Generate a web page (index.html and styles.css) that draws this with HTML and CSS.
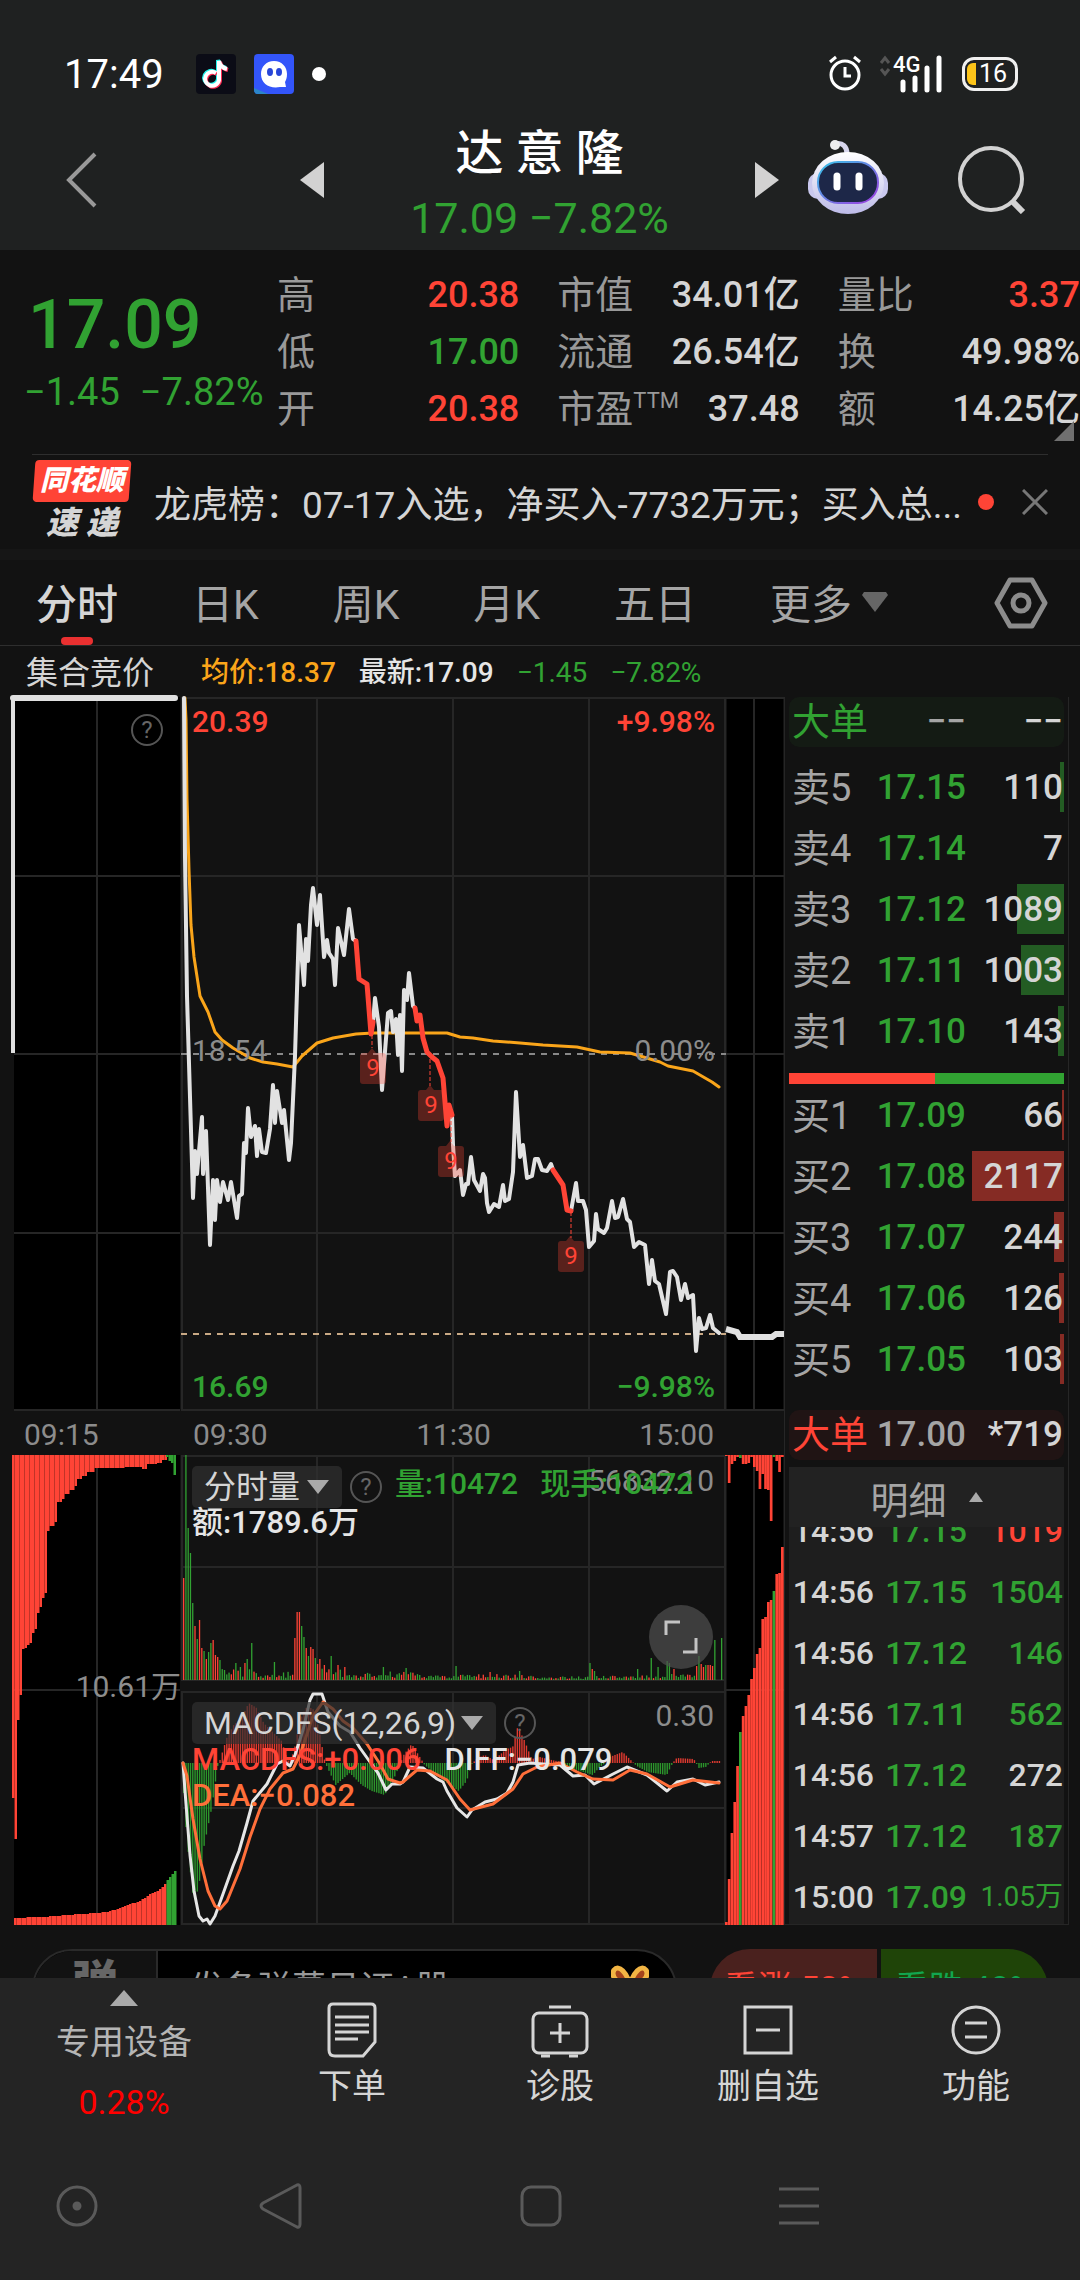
FILE: index.html
```html
<!DOCTYPE html>
<html lang="zh-CN">
<head>
    <meta charset="UTF-8">
    <meta name="viewport" content="width=device-width, initial-scale=1.0">
    <title>达意隆 分时</title>
    <link rel="stylesheet" href="styles.css">
</head>
<body>

<header class="header">
    <!-- Status bar -->
    <div class="status-bar">
        <span class="clock">17:49</span>
        <svg class="app-icon" viewBox="0 0 40 40">
            <rect width="40" height="40" rx="4" fill="#0b0c16"/>
            <g fill="none" stroke-width="4">
                <path d="M19 18a7 7 0 1 0 3 7V6c1 5 4 7 8 8" stroke="#25f4ee"/>
                <path d="M21 20a7 7 0 1 0 3 7V8c1 5 4 7 8 8" stroke="#fe2c55"/>
                <path d="M20 19a7 7 0 1 0 3 7V7c1 5 4 7 8 8" stroke="#fff"/>
            </g>
        </svg>
        <svg class="app-icon" viewBox="0 0 40 40">
            <rect width="40" height="40" rx="4" fill="#3355fa"/>
            <path d="M0 34l14 6H4a4 4 0 0 1-4-4z" fill="#2b86c9"/>
            <path d="M20 7c8 0 13 6 13 13 0 4-1 6-2 8l1 5h-6c-10 2-19-3-19-13C7 13 12 7 20 7z" fill="#fff"/>
            <ellipse cx="16" cy="18" rx="3" ry="4" fill="#2846d8"/>
            <ellipse cx="25" cy="18" rx="3" ry="4" fill="#2846d8"/>
        </svg>
        <span class="notice-dot"></span>
        <span class="status-icons">
            <svg width="34" height="38" viewBox="0 0 34 38" fill="none" stroke="#fff" stroke-width="3">
                <circle cx="17" cy="20" r="14"/>
                <path d="M17 12v9h6M2 7l6-5M32 7l-6-5"/>
            </svg>
            <span class="signal">
                <svg width="66" height="38" viewBox="0 0 66 38" fill="none">
                    <path d="M2 8l4-5 4 5M2 14l4 5 4-5" stroke="#555" stroke-width="3"/>
                    <path d="M24 27v8M36 23v12M48 13v22M60 3v32" stroke="#fff" stroke-width="5" stroke-linecap="round"/>
                </svg>
                <span class="network">4G</span>
            </span>
            <span class="battery">16</span>
        </span>
    </div>

    <!-- Stock title -->
    <div class="title-bar">
        <div class="title-left">
            <button aria-label="返回"><svg width="32" height="56" viewBox="0 0 32 56"><path d="M29 2L3 28l26 26" fill="none" stroke="#999" stroke-width="4"/></svg></button>
            <button aria-label="上一只"><svg width="24" height="36" viewBox="0 0 24 36"><path d="M24 0v36L0 18z" fill="#d2d2d2"/></svg></button>
        </div>
        <div class="title-center">
            <h1>达 意 隆</h1>
            <p class="green">17.09 −7.82%</p>
        </div>
        <div class="title-right">
            <button aria-label="下一只"><svg width="24" height="36" viewBox="0 0 24 36"><path d="M0 0v36l24-18z" fill="#d2d2d2"/></svg></button>
            <button class="robot" aria-label="助手">
                <svg width="82" height="76" viewBox="0 0 82 76">
                    <defs>
                        <linearGradient id="shell" x1="0" y1="0" x2="0" y2="1"><stop offset="0" stop-color="#fff"/><stop offset="1" stop-color="#bdbbe8"/></linearGradient>
                        <linearGradient id="rim" x1="0" y1="0" x2="1" y2="1"><stop offset="0" stop-color="#35c3e8"/><stop offset="1" stop-color="#a03be0"/></linearGradient>
                    </defs>
                    <path d="M28 5c8-2 12 3 12 10" fill="none" stroke="#d8d7ee" stroke-width="5"/>
                    <circle cx="28" cy="6" r="5" fill="#eee"/>
                    <rect x="1" y="34" width="80" height="26" rx="10" fill="#c9c8ee"/>
                    <ellipse cx="41" cy="44" rx="36" ry="31" fill="url(#shell)"/>
                    <rect x="11" y="23" width="60" height="41" rx="20" fill="#1d2748" stroke="url(#rim)" stroke-width="2"/>
                    <path d="M30 37v11M52 37v11" stroke="#fff" stroke-width="7" stroke-linecap="round"/>
                </svg>
            </button>
            <button class="search" aria-label="搜索"><svg width="68" height="68" viewBox="0 0 68 68" fill="none" stroke="#d2d2d2" stroke-width="4"><circle cx="33" cy="33" r="31"/><path d="M54 55l11 11" stroke-width="6"/></svg></button>
        </div>
    </div>
</header>

<!-- Quote -->
<section class="quote">
    <div class="quote-price green">
        <div class="price">17.09</div>
        <div class="change"><span>−1.45</span><span>−7.82%</span></div>
    </div>
    <dl class="quote-grid">
        <div><dt>高</dt><dd class="red">20.38</dd></div>
        <div><dt>市值</dt><dd>34.01亿</dd></div>
        <div><dt>量比</dt><dd class="red">3.37</dd></div>
        <div><dt>低</dt><dd class="green">17.00</dd></div>
        <div><dt>流通</dt><dd>26.54亿</dd></div>
        <div><dt>换</dt><dd>49.98%</dd></div>
        <div><dt>开</dt><dd class="red">20.38</dd></div>
        <div><dt>市盈<sup>TTM</sup></dt><dd>37.48</dd></div>
        <div><dt>额</dt><dd>14.25亿</dd></div>
    </dl>
    <span class="quote-corner"></span>
</section>

<!-- News -->
<section class="news">
    <div class="news-logo">
        <span class="news-brand">同花顺</span>
        <span class="news-name">速 递</span>
    </div>
    <a class="news-text" href="#">龙虎榜：07-17入选，净买入-7732万元；买入总...</a>
    <span class="news-dot"></span>
    <button aria-label="关闭"><svg width="26" height="26" viewBox="0 0 26 26"><path d="M1 1l24 24M25 1L1 25" stroke="#777" stroke-width="3"/></svg></button>
</section>

<nav class="tabs">
    <div class="tab-list">
        <a class="active" href="#">分时</a>
        <a href="#">日K</a>
        <a href="#">周K</a>
        <a href="#">月K</a>
        <a href="#">五日</a>
        <a class="more" href="#">更多<svg width="26" height="20" viewBox="0 0 26 20"><path d="M2 0h22l2 3-13 17L0 3z" fill="#666"/></svg></a>
    </div>
    <button aria-label="设置">
        <svg width="54" height="52" viewBox="0 0 54 52" fill="none" stroke="#8c8c8c" stroke-width="5" stroke-linejoin="round">
            <path d="M16 3h22l13 23-13 23H16L3 26z"/>
            <circle cx="27" cy="26" r="8"/>
        </svg>
    </button>
</nav>

<div class="summary">
    <span class="summary-auction">集合竞价</span>
    <span class="orange">均价:18.37</span>
    <span class="white">最新:17.09</span>
    <span class="green">−1.45</span>
    <span class="green">−7.82%</span>
</div>

<main class="market">
    <div class="charts">
        <!-- Call auction -->
        <div class="column">
            <div class="panel">
                <svg class="price-chart" viewBox="0 0 169 714" preserveAspectRatio="none">
                    <rect x="2" width="166" height="714" fill="#000"/>
                    <path class="grid" d="M85 0v714M2 179h166M2 357h166M2 536h166M2 713h166"/>
                    <path d="M1 356V1" stroke="#e0e0e0" stroke-width="4"/>
                    <path d="M1 1h162" stroke="#e0e0e0" stroke-width="6" stroke-linecap="round"/>
                </svg>
                <button class="help help-auction" aria-label="集合竞价说明">?</button>
            </div>
            <div class="axis"><span>09:15</span></div>
            <div class="panel">
                <svg class="lower-chart" viewBox="0 0 169 470" preserveAspectRatio="none">
                    <rect x="2" width="166" height="470" fill="#000"/>
                    <path class="grid" d="M85 0v470M2 235h166"/>
                    <g id="auction-bars"></g>
                </svg>
                <span class="label label-auction">10.61万</span>
            </div>
        </div>

        <!-- Continuous trading -->
        <div class="column">
            <div class="panel">
                <svg class="price-chart" viewBox="0 0 545 714" preserveAspectRatio="none">
                    <path class="grid" d="M1 0v714M136 0v714M272 0v714M408 0v714M544 0v714M0 1h545M0 179h545M0 536h545M0 713h545"/>
                    <path d="M0 357h545" stroke="#888" stroke-width="2" stroke-dasharray="6 6"/>
                    <path d="M0 637h545" stroke="#c9a985" stroke-width="2" stroke-dasharray="6 6"/>
                    <polyline class="line average" points="4,1 5,23 6,102 8,173 10,228 13,260 19,299 27,315 34,335 41,343 52,351 69,361 82,365 96,367 112,370 121,359 136,346 152,341 175,337 192,336 229,336 266,336 279,340 292,341 312,344 339,346 362,348 396,350 419,355 449,356 479,365 487,369 512,374 531,385 538,390"/>
                    <polyline class="line price-line" points="3,1 4,160 6,299 12,501 14,454 16,477 21,420 22,477 25,434 29,548 32,483 34,523 36,483 39,505 42,485 47,503 50,485 56,521 58,499 61,497 63,446 65,456 67,411 70,440 74,429 76,459 78,432 81,455 85,456 89,432 92,388 94,426 96,394 101,426 103,413 108,463 110,446 114,359 118,228 123,288 125,242 127,264 130,208 132,191 136,228 139,198 143,260 146,243 148,256 152,262 154,288 157,231 163,258 168,212 172,242 175,244"/>
                    <polyline class="line price-line" points="192,326 194,301 198,330 201,393 207,316 210,314 212,335 215,322 217,358 219,318 221,374 223,293 226,303 228,276 232,309 234,311"/>
                    <polyline class="line price-line" points="271,418 272,448 274,479 279,473 282,498 285,487 287,487 290,460 293,483 299,494 302,477 304,481 306,506 308,515 313,507 318,510 322,488 324,504 328,502 332,475 335,395 339,460 342,448 346,481 351,479 354,462 357,462 361,473 366,474 370,467 372,473"/>
                    <polyline class="line price-line" points="390,514 395,486 397,504 402,504 405,513 408,550 413,544 415,517 417,532 423,536 426,531 431,504 434,521 437,520 442,502 446,522 449,525 453,550 458,545 464,548 468,587 471,563 474,584 478,587 485,617 489,575 492,574 496,580 500,603 504,587 507,601 512,598 515,654 518,621 521,632 525,631 529,618 532,631 538,636"/>
                    <polyline class="line signal-line" points="175,244 178,282 186,287 190,337 192,325"/>
                    <polyline class="line signal-line" points="234,311 236,324 239,318 242,341 246,355 251,360 256,364 262,381 266,429 268,408 271,418"/>
                    <polyline class="line signal-line" points="372,473 382,488 386,513 390,514"/>
                    <path d="M191 338v13M249 362v27M270 418v27M390 515v26" stroke="#ff4436" stroke-dasharray="4 2"/>
                    <g class="nine">
                        <path d="M179 359q0-3 3-3h5l4-5 4 5h7q3 0 3 3v25q0 3-3 3h-20q-3 0-3-3z"/>
                        <path d="M237 396q0-3 3-3h5l4-5 4 5h7q3 0 3 3v25q0 3-3 3h-20q-3 0-3-3z"/>
                        <path d="M257 452q0-3 3-3h5l4-5 4 5h7q3 0 3 3v25q0 3-3 3h-20q-3 0-3-3z"/>
                        <path d="M377 547q0-3 3-3h5l4-5 4 5h7q3 0 3 3v25q0 3-3 3h-20q-3 0-3-3z"/>
                        <text x="192" y="379">9</text>
                        <text x="250" y="416">9</text>
                        <text x="270" y="472">9</text>
                        <text x="390" y="567">9</text>
                    </g>
                </svg>
                <span class="label top-left red">20.39</span>
                <span class="label top-right red">+9.98%</span>
                <span class="label middle-left">18.54</span>
                <span class="label middle-right">0.00%</span>
                <span class="label bottom-left green">16.69</span>
                <span class="label bottom-right green">−9.98%</span>
            </div>
            <div class="axis axis-main"><span>09:30</span><span>11:30</span><span>15:00</span></div>
            <div class="panel">
                <svg class="lower-chart" viewBox="0 0 545 470" preserveAspectRatio="none">
                    <path class="grid" d="M1 0v225M136 0v225M272 0v225M408 0v225M1 237v233M136 237v233M272 237v233M408 237v233M544 0v470M0 1h545M0 112h545M0 225h545M0 237h545M0 353h545M0 469h545"/>
                    <g id="volume-bars"></g>
                    <g id="macd-bars"></g>
                    <polyline class="line diff" points="2,308 4,336 9,400 13,436 18,461 22,466 26,464 29,469 34,461 42,439 52,411 58,396 66,368 72,346 86,329 96,309 102,306 109,311 114,300 122,275 129,245 132,239 141,239 147,257 159,271 169,277 179,293 189,307 197,318 205,335 211,329 219,329 222,327 229,312 242,313 256,324 262,327 266,336 276,353 286,362 291,355 304,347 316,344 326,338 332,327 337,310 349,308 362,309 379,310 392,321 404,320 413,329 432,319 446,312 466,320 486,336 496,327 512,324 524,330 538,327"/>
                    <polyline class="line dea" points="2,308 6,321 12,364 19,404 27,436 34,451 39,454 46,446 59,414 69,382 79,354 89,334 102,318 112,314 119,300 132,261 142,247 152,254 162,266 172,273 186,289 199,309 207,324 219,328 222,327 236,315 249,316 266,325 279,344 289,355 312,349 332,334 342,319 356,312 379,308 396,317 412,324 432,325 449,315 466,319 489,332 512,325 538,328"/>
                </svg>
                <span class="label volume-max">56832.10</span>
                <div class="indicator volume-indicator">
                    <label class="picker picker-volume">
                        <select aria-label="副图指标一"><option>分时量</option></select>
                        <svg width="22" height="14" viewBox="0 0 22 14"><path d="M0 0h22L11 14z" fill="#aaa"/></svg>
                    </label>
                    <button class="help" aria-label="分时量说明">?</button>
                    <span class="green">量:10472</span>
                    <span class="green hand">现手:10472</span>
                </div>
                <span class="reading reading-amount white">额:1789.6万</span>
                <button class="expand" aria-label="全屏">
                    <svg width="34" height="34" viewBox="0 0 34 34" fill="none" stroke="#c4c4c4" stroke-width="3"><path d="M2 15V2h14M19 32h13V18"/></svg>
                </button>
                <div class="indicator macd-indicator">
                    <label class="picker picker-macd">
                        <select aria-label="副图指标二"><option>MACDFS(12,26,9)</option></select>
                        <svg width="22" height="14" viewBox="0 0 22 14"><path d="M0 0h22L11 14z" fill="#aaa"/></svg>
                    </label>
                    <button class="help" aria-label="MACDFS说明">?</button>
                </div>
                <span class="label macd-max">0.30</span>
                <div class="reading reading-macd"><span class="red">MACDFS:+0.006</span><span class="white">DIFF:−0.079</span></div>
                <span class="reading reading-dea">DEA:−0.082</span>
            </div>
        </div>

        <!-- After hours -->
        <div class="column">
            <div class="panel">
                <svg class="price-chart" viewBox="0 0 58 714" preserveAspectRatio="none">
                    <rect x="1" width="56" height="714" fill="#000"/>
                    <path class="grid" d="M28 0v714M0 1h58M0 179h58M0 357h58M0 536h58M0 713h58"/>
                    <polyline points="0,632 11,635 14,640 46,640 50,637 58,637" fill="none" stroke="#e0e0e0" stroke-width="6"/>
                </svg>
            </div>
            <div class="axis"></div>
            <div class="panel">
                <svg class="lower-chart" viewBox="0 0 58 470" preserveAspectRatio="none">
                    <rect x="1" width="56" height="470" fill="#000"/>
                    <path class="grid" d="M28 0v470M0 235h58"/>
                    <g id="after-bars"></g>
                </svg>
            </div>
        </div>
    </div>

    <!-- Order book -->
    <aside class="book">
        <table class="big-order big-sell">
            <tr><th class="green">大单</th><td class="muted">−−</td><td>−−</td></tr>
        </table>
        <table class="levels sell">
            <tr><th>卖5</th><td>17.15</td><td><i style="width: 4px"></i><b>110</b></td></tr>
            <tr><th>卖4</th><td>17.14</td><td><b>7</b></td></tr>
            <tr><th>卖3</th><td>17.12</td><td><i style="width: 47px"></i><b>1089</b></td></tr>
            <tr><th>卖2</th><td>17.11</td><td><i style="width: 43px"></i><b>1003</b></td></tr>
            <tr><th>卖1</th><td>17.10</td><td><i style="width: 6px"></i><b>143</b></td></tr>
        </table>
        <div class="ratio"><span style="width: 53%"></span></div>
        <table class="levels buy">
            <tr><th>买1</th><td>17.09</td><td><i style="width: 2px"></i><b>66</b></td></tr>
            <tr><th>买2</th><td>17.08</td><td><i style="width: 92px"></i><b>2117</b></td></tr>
            <tr><th>买3</th><td>17.07</td><td><i style="width: 10px"></i><b>244</b></td></tr>
            <tr><th>买4</th><td>17.06</td><td><i style="width: 5px"></i><b>126</b></td></tr>
            <tr><th>买5</th><td>17.05</td><td><i style="width: 4px"></i><b>103</b></td></tr>
        </table>
        <table class="big-order big-buy">
            <tr><th class="red">大单</th><td class="muted">17.00</td><td>*719</td></tr>
        </table>
        <button class="detail-header">明细<svg width="14" height="10" viewBox="0 0 14 10"><path d="M7 0l7 10H0z" fill="#aaa"/></svg></button>
        <div class="detail">
            <table>
                <tr><td>14:56</td><td>17.15</td><td class="red">1019</td></tr>
                <tr><td>14:56</td><td>17.15</td><td class="green">1504</td></tr>
                <tr><td>14:56</td><td>17.12</td><td class="green">146</td></tr>
                <tr><td>14:56</td><td>17.11</td><td class="green">562</td></tr>
                <tr><td>14:56</td><td>17.12</td><td>272</td></tr>
                <tr><td>14:57</td><td>17.12</td><td class="green">187</td></tr>
                <tr><td>15:00</td><td>17.09</td><td class="green small">1.05万</td></tr>
            </table>
        </div>
    </aside>
</main>

<!-- Comment bar, mostly under the bottom menu -->
<section class="comments">
    <div class="comment-box">
        <button class="comment-toggle">弹</button>
        <a class="comment-input" href="#">发条弹幕见证A股</a>
        <svg width="38" height="40" viewBox="0 0 38 40" fill="none"><path d="M19 20C16 8 8-1 3 5c-4 7 5 15 16 15zM19 20C22 8 30-1 35 5c4 7-5 15-16 15z" stroke="#f2b544" stroke-width="5" fill="#a5441c"/></svg>
    </div>
    <div class="vote">
        <button class="vote-up">看涨 52%</button>
        <button class="vote-down">看跌 48%</button>
    </div>
</section>

<footer class="footer">
    <nav class="menu">
        <a class="device" href="#">
            <svg width="28" height="16" viewBox="0 0 28 16"><path d="M14 0l14 16H0z" fill="#aaa"/></svg>
            <span>专用设备</span>
            <span class="rate">0.28%</span>
        </a>
        <a href="#">
            <svg width="60" height="56" viewBox="0 0 60 56" fill="none" stroke="#d5d5d5" stroke-width="3"><path d="M11 2h38q4 0 4 4v34L41 54H13q-6 0-6-6V6q0-4 4-4zM13 15h34M13 23h34M13 30h34M13 37h23"/></svg>
            <span>下单</span>
        </a>
        <a href="#">
            <svg width="60" height="56" viewBox="0 0 60 56" fill="none" stroke="#d5d5d5" stroke-width="3"><rect x="3" y="11" width="54" height="40" rx="6"/><path d="M19 5h22M30 21v20M20 31h20M11 54h9M39 54h9"/></svg>
            <span>诊股</span>
        </a>
        <a href="#">
            <svg width="60" height="56" viewBox="0 0 60 56" fill="none" stroke="#d5d5d5" stroke-width="3"><rect x="7" y="5" width="46" height="46"/><path d="M18 28h24"/></svg>
            <span>删自选</span>
        </a>
        <a href="#">
            <svg width="60" height="56" viewBox="0 0 60 56" fill="none" stroke="#d5d5d5" stroke-width="3"><circle cx="30" cy="28" r="23"/><path d="M19 21h22M19 35h22"/></svg>
            <span>功能</span>
        </a>
    </nav>
    <div class="system-nav">
        <button aria-label="悬浮球"><svg width="44" height="48" viewBox="0 0 44 48" fill="none" stroke="#5a5a5a" stroke-width="3"><circle cx="22" cy="24" r="19"/><circle cx="22" cy="24" r="3" fill="#5a5a5a"/></svg></button>
        <button aria-label="返回"><svg width="44" height="48" viewBox="0 0 44 48" fill="none" stroke="#5a5a5a" stroke-width="3" stroke-linejoin="round"><path d="M38 3Q41 2 41 6v36q0 4-3 3L4 27q-4-3 0-6z"/></svg></button>
        <button aria-label="主页"><svg width="44" height="48" viewBox="0 0 44 48" fill="none" stroke="#5a5a5a" stroke-width="3"><rect x="3" y="5" width="38" height="38" rx="9"/></svg></button>
        <button aria-label="多任务"><svg width="44" height="48" viewBox="0 0 44 48" fill="none" stroke="#5a5a5a" stroke-width="3"><path d="M2 7h40M2 24h40M2 41h40"/></svg></button>
    </div>
</footer>

<script src="chart.js"></script>
</body>
</html>
```
FILE: styles.css
```css
* {
    box-sizing: border-box;
}

body {
    margin: 0;
    min-height: 100vh;
    display: flex;
    flex-direction: column;
    background-color: #121212;
    color: #d5d5d5;
    font-family: Roboto, "Noto Sans CJK SC", sans-serif;
    font-size: 30px;
}

h1, p, dl, dd {
    margin: 0;
}

a {
    color: inherit;
    text-decoration: none;
}

button {
    padding: 0;
    border: none;
    background: none;
    color: inherit;
    font: inherit;
    cursor: pointer;
}

svg {
    display: block;
}

.green {
    color: #31a232;
}

.red {
    color: #ff4436;
}

.orange {
    color: #faa51a;
}

.white {
    color: #e6e6e6;
}

/* Header */
.header {
    background-color: #1f2121;
}

.status-bar {
    display: flex;
    align-items: center;
    height: 112px;
    padding: 36px 62px 0 64px;
    color: #fff;
}

.clock {
    margin-right: 32px;
    font-size: 40px;
}

.app-icon {
    width: 40px;
    height: 40px;
    margin-right: 18px;
}

.notice-dot {
    width: 14px;
    height: 14px;
    border-radius: 50%;
    background-color: #fff;
}

.status-icons {
    display: flex;
    align-items: center;
    margin-left: auto;
    gap: 17px;
}

.signal {
    position: relative;
}

.network {
    position: absolute;
    top: 0;
    left: 14px;
    font-size: 22px;
    font-weight: 500;
    line-height: 20px;
}

.battery {
    position: relative;
    width: 56px;
    height: 34px;
    padding-left: 6px;
    border: 3px solid #f0f0f0;
    border-radius: 12px;
    font-size: 25px;
    line-height: 28px;
    text-align: center;
}

.battery::before {
    content: "";
    position: absolute;
    top: 3px;
    left: 2px;
    width: 9px;
    height: 22px;
    border-radius: 6px 0 0 6px;
    background-color: #fcc419;
}

.title-bar {
    display: grid;
    grid-template-columns: 324px 1fr 325px;
    height: 138px;
}

.title-left {
    display: flex;
    align-items: center;
    justify-content: space-between;
    padding: 0 0 4px 66px;
}

.title-center {
    padding-top: 12px;
    text-align: center;
}

.title-center h1 {
    color: #fff;
    font-size: 48px;
    font-weight: 500;
    line-height: 60px;
}

.title-center p {
    font-size: 43px;
    line-height: 68px;
}

.title-right {
    display: flex;
    align-items: center;
    padding-bottom: 4px;
}

.robot {
    margin: 0 69px 6px 28px;
}

/* Quote */
.quote {
    position: relative;
    display: grid;
    grid-template-columns: 277px 1fr;
    padding: 17px 0 16px;
}

.quote-price {
    padding: 20px 0 0 24px;
}

.price {
    padding-left: 4px;
    font-size: 68px;
    font-weight: 500;
    line-height: 76px;
}

.change {
    display: flex;
    gap: 20px;
    font-size: 38px;
    line-height: 58px;
}

.quote-grid {
    display: grid;
    grid-template-columns: repeat(3, 1fr);
    column-gap: 38px;
    font-size: 36px;
}

.quote-grid div {
    display: flex;
    justify-content: space-between;
    line-height: 57px;
    white-space: nowrap;
}

.quote-grid dt {
    color: #999;
    font-size: 38px;
}

.quote-grid dd {
    font-weight: 500;
}

.quote-grid sup {
    font-size: 22px;
    line-height: 20px;
}

.quote-corner {
    position: absolute;
    right: 6px;
    bottom: 13px;
    border-left: 20px solid transparent;
    border-bottom: 20px solid #707070;
}

/* News */
.news {
    display: flex;
    align-items: center;
    height: 95px;
    margin: 0 32px;
    border-top: 1px solid #2e2e2e;
}

.news-logo {
    display: flex;
    flex-direction: column;
    align-items: center;
    width: 100px;
    margin-right: 22px;
    font-style: italic;
    font-weight: 900;
    line-height: 42px;
}

.news-brand {
    position: relative;
    z-index: 0;
    color: #fff;
    font-size: 28px;
}

.news-brand::before {
    content: "";
    position: absolute;
    inset: 0 -6px;
    z-index: -1;
    border-radius: 4px;
    background-color: #ff4436;
    transform: skewX(-4deg);
}

.news-name {
    font-size: 32px;
}

.news-text {
    flex: 1;
    overflow: hidden;
    font-size: 37px;
    white-space: nowrap;
}

.news-dot {
    width: 16px;
    height: 16px;
    margin-right: 28px;
    border-radius: 50%;
    background-color: #ff4436;
}

/* Tabs */
.tabs {
    display: flex;
    align-items: center;
    justify-content: space-between;
    height: 97px;
    padding: 0 32px 0 36px;
    border-top: 11px solid #161616;
    border-bottom: 1px solid #2e2e2e;
}

.tab-list {
    display: flex;
    justify-content: space-between;
    width: 85%;
    max-width: 852px;
    color: #a5a5a5;
    font-size: 41px;
    line-height: 80px;
}

.tab-list a {
    padding-top: 5px;
}

.tab-list .active {
    position: relative;
    color: #d5d5d5;
    font-weight: 500;
}

.tab-list .active::after {
    content: "";
    position: absolute;
    bottom: 0;
    left: 25px;
    width: 32px;
    height: 8px;
    border-radius: 4px;
    background-color: #e93030;
}

.more {
    display: flex;
    align-items: center;
    gap: 10px;
}

.more svg {
    margin-bottom: 6px;
}

.summary {
    display: flex;
    gap: 23px;
    height: 51px;
    padding-left: 26px;
    font-size: 28px;
    line-height: 54px;
}

.summary .white, .summary .orange {
    font-weight: 500;
}

.summary-auction {
    width: 152px;
    font-size: 32px;
}

/* Charts */
.market {
    display: grid;
    grid-template-columns: 1fr 285px;
    padding-right: 11px;
}

.charts {
    display: grid;
    grid-template-columns: 169fr 545fr 58fr;
    min-width: 0;
    padding-left: 12px;
}

.panel {
    position: relative;
}

.panel svg {
    overflow: visible;
}

.price-chart {
    width: 100%;
    height: 714px;
}

.lower-chart {
    width: 100%;
    height: 470px;
}

.grid {
    fill: none;
    stroke: #262626;
    stroke-width: 2;
}

.line {
    fill: none;
    stroke-width: 4;
    stroke-linejoin: round;
    stroke-linecap: round;
}

.average {
    stroke: #faa51a;
    stroke-width: 3;
}

.price-line {
    stroke: #e2e2e2;
}

.signal-line {
    stroke: #ff4436;
    stroke-width: 5;
}

.diff {
    stroke: #e6e6e6;
    stroke-width: 3;
}

.dea {
    stroke: #ff6f3a;
    stroke-width: 3;
}

.nine path {
    fill: #ff4436;
    fill-opacity: 0.3;
}

.nine text {
    fill: #ff4436;
    font-size: 24px;
    text-anchor: middle;
}

.label, .reading {
    position: absolute;
    font-size: 30px;
    line-height: 36px;
    white-space: nowrap;
}

.label {
    color: #8c8c8c;
}

.label.red {
    color: #ff4436;
    font-weight: 500;
}

.label.green {
    color: #31a232;
    font-weight: 500;
}

.reading {
    font-size: 31px;
    font-weight: 500;
}

.top-left {
    top: 7px;
    left: 11px;
}

.top-right {
    top: 7px;
    right: 11px;
}

.middle-left {
    top: 336px;
    left: 11px;
}

.middle-right {
    top: 336px;
    right: 11px;
}

.bottom-left {
    bottom: 6px;
    left: 11px;
}

.bottom-right {
    bottom: 6px;
    right: 11px;
}

.label-auction {
    top: 214px;
    right: 0;
}

.axis {
    height: 44px;
    padding-left: 12px;
    color: #8c8c8c;
    line-height: 48px;
}

.axis-main {
    display: flex;
    justify-content: space-between;
    padding: 0 12px;
}

.help {
    width: 32px;
    height: 32px;
    border: 2px solid #555;
    border-radius: 50%;
    color: #666;
    font-size: 24px;
    line-height: 28px;
}

.help-auction {
    position: absolute;
    top: 17px;
    right: 18px;
}

.indicator {
    position: absolute;
    left: 11px;
    display: flex;
    align-items: center;
    line-height: 36px;
    white-space: nowrap;
}

.indicator .help {
    margin: 0 13px 0 8px;
    line-height: 28px;
}

.indicator .green {
    padding-bottom: 6px;
    font-weight: 500;
}

.volume-indicator {
    top: 11px;
}

.macd-indicator {
    top: 247px;
}

.hand {
    margin-left: 22px;
}

.picker {
    position: relative;
}

.picker select {
    display: block;
    width: 100%;
    height: 42px;
    padding: 0 0 0 12px;
    border: none;
    border-radius: 5px;
    background-color: rgba(48, 48, 48, 0.7);
    color: #d5d5d5;
    font: inherit;
    font-size: 32px;
    appearance: none;
}

.picker svg {
    position: absolute;
    top: 14px;
    right: 13px;
}

.picker-volume {
    width: 150px;
}

.picker-macd {
    width: 304px;
}

.volume-max {
    top: 8px;
    right: 12px;
}

.macd-max {
    top: 243px;
    right: 12px;
}

.reading-amount {
    top: 50px;
    left: 11px;
}

.reading-macd {
    top: 287px;
    left: 11px;
    display: flex;
    gap: 24px;
}

.reading-dea {
    top: 323px;
    left: 11px;
    color: #ff6f3a;
}

.expand {
    position: absolute;
    top: 150px;
    right: 13px;
    display: flex;
    align-items: center;
    justify-content: center;
    width: 64px;
    height: 64px;
    border-radius: 50%;
    background-color: rgba(80, 80, 80, 0.7);
}

/* Order book */
.book {
    padding: 0 4px;
    border: 1px solid #262626;
    border-top: none;
    font-size: 35px;
    font-weight: 500;
}

.book table {
    width: 100%;
    border-spacing: 0;
    table-layout: fixed;
}

.book tr {
    height: 61px;
}

.book th, .book td {
    position: relative;
    padding: 0 1px 0 0;
    line-height: 50px;
    text-align: right;
    white-space: nowrap;
}

.book th {
    width: 76px;
    padding-left: 3px;
    color: #a5a5a5;
    font-size: 38px;
    font-weight: 400;
    text-align: left;
}

.book td:nth-child(2) {
    width: 102px;
    color: #31a232;
}

.book th.green {
    color: #31a232;
}

.book th.red {
    color: #ff4436;
}

.book td.muted:nth-child(2) {
    color: #a5a5a5;
}

.book i {
    position: absolute;
    top: 5px;
    right: 0;
    height: 50px;
}

.book b {
    position: relative;
    font-weight: 500;
}

.sell i {
    background-color: #235c23;
}

.buy i {
    background-color: #852b24;
}

.book .big-order {
    height: 50px;
    border-radius: 10px;
}

.book .big-order tr {
    height: 50px;
}

.big-sell {
    margin-bottom: 10px;
    background-color: #141b14;
}

.big-buy {
    margin: 20px 0 7px;
    background-color: #201414;
}

.ratio {
    height: 11px;
    margin: 11px 0 1px;
    background-color: #31a232;
}

.ratio span {
    display: block;
    height: 100%;
    background-color: #ff4436;
}

.detail-header {
    display: flex;
    align-items: center;
    justify-content: center;
    gap: 22px;
    width: 100%;
    height: 60px;
    background-color: #222;
    color: #a5a5a5;
    font-size: 38px;
    font-weight: 400;
}

.detail {
    height: 397px;
    overflow: hidden;
    background-color: #1e1e1e;
}

.detail table {
    margin-top: -27px;
    font-size: 32px;
}

.detail td:first-child {
    width: 86px;
}

.detail td:nth-child(2) {
    width: 93px;
}

.detail td.small {
    font-size: 28px;
    font-weight: 400;
}

/* Comments */
.comments {
    display: flex;
    justify-content: space-between;
    align-items: flex-start;
    height: 53px;
    padding: 24px 32px 0;
    overflow: hidden;
}

.comment-box {
    display: flex;
    width: 645px;
    height: 80px;
    overflow: hidden;
    border: 2px solid #2a2a2a;
    border-radius: 40px;
    background-color: #000;
}

.comment-toggle {
    width: 124px;
    padding-bottom: 14px;
    border-right: 2px solid #2a2a2a;
    background-color: #121212;
    color: #666;
    font-size: 46px;
    font-weight: 900;
    line-height: 60px;
}

.comment-input {
    flex: 1;
    padding-left: 32px;
    color: #999;
    font-size: 34px;
    line-height: 74px;
}

.comment-box svg {
    margin: 14px 26px 0 0;
}

.vote {
    display: flex;
    gap: 4px;
    width: 338px;
    height: 80px;
    overflow: hidden;
    border-radius: 40px;
    font-size: 34px;
}

.vote button {
    flex: 1;
    padding-bottom: 8px;
}

.vote-up {
    background-color: #4a211e;
    color: #ff4436;
}

.vote-down {
    background-color: #1f4408;
    color: #12a650;
}

/* Footer */
.footer {
    flex: 1;
    background-color: #242424;
}

.menu {
    display: grid;
    grid-template-columns: 248fr 208fr 208fr 208fr 208fr;
    height: 178px;
    font-size: 34px;
    line-height: 48px;
    text-align: center;
}

.menu a {
    display: flex;
    flex-direction: column;
    align-items: center;
    padding-top: 24px;
    gap: 4px;
}

.menu .device {
    padding-top: 12px;
    gap: 12px;
    color: #b5b5b5;
}

.menu .rate {
    color: #f00;
}

.system-nav {
    display: grid;
    grid-template-columns: 204fr 260fr 258fr 258fr;
    align-items: center;
    height: 100px;
    padding: 0 45px 0 55px;
}

.system-nav button {
    justify-self: start;
}
```
FILE: chart.js
```js
const RED = '#ff4436';
const GREEN = '#31a232';

function bar(group, x, y, width, height, color) {
    const rect = document.createElementNS('http://www.w3.org/2000/svg', 'rect');
    rect.setAttribute('x', x);
    rect.setAttribute('y', y);
    rect.setAttribute('width', width);
    rect.setAttribute('height', height);
    rect.setAttribute('fill', color);
    group.appendChild(rect);
}

// Linear value between [x, value] points
function valueAt(points, x) {
    for (let i = 1; i < points.length; i++) {
        const [x0, v0] = points[i - 1];
        const [x1, v1] = points[i];
        if (x <= x1) {
            return v0 + (v1 - v0) * (x - x0) / (x1 - x0);
        }
    }
    return points[points.length - 1][1];
}

// Call auction: matched volume from the top, unmatched from the bottom
const auctionTop = [
    [0, 343], [3, 384], [5, 265], [8, 240], [10, 194], [13, 193], [15, 190], [18, 188], [20, 178], [23, 174],
    [25, 158], [28, 152], [30, 143], [32, 138], [35, 76], [38, 71], [41, 67], [44, 47], [49, 44], [53, 39],
    [57, 35], [61, 31], [64, 24], [69, 21], [74, 17], [81, 13], [112, 12], [130, 14], [135, 9], [145, 8],
    [150, 5], [154, 1]
];
const auctionBottom = [[0, 7], [28, 8], [55, 10], [95, 13], [112, 19], [127, 24], [136, 30], [148, 36], [154, 44], [164, 56]];
const auction = document.getElementById('auction-bars');
for (let x = 0; x < 154; x += 2.5) {
    const step = auctionTop.filter(p => p[0] <= x + 0.5).pop();
    bar(auction, x, 0, 2.5, step[1], RED);
}
[2, 6, 8, 20].forEach((h, i) => bar(auction, 154 + i * 2.5, 0, 2.5, h, GREEN));
for (let x = 2; x < 164; x += 2.5) {
    const h = Math.round(valueAt(auctionBottom, x));
    bar(auction, x, 470 - h, 2.5, h, x < 153 ? RED : GREEN);
}

// Minute volume: quiet level plus the spikes
const quiet = [[0, 12], [40, 11], [60, 11], [85, 6], [100, 7], [140, 12], [180, 6], [220, 8], [250, 5], [330, 5], [360, 3], [460, 4], [538, 8]];
const spikes = {
    0: -102, 1: 225, 2: 152, 3: 127, 4: 77, 5: -54, 6: 41, 7: -60, 8: -32, 9: 29, 10: -21, 11: 28, 12: 37, 13: -40,
    14: -25, 15: -23, 16: 20, 23: 17, 27: -17, 28: 21, 30: 37, 40: 18, 49: -42, 50: -68, 51: -68, 52: 54, 53: 43,
    54: -32, 55: 24, 56: -33, 57: -31, 58: 22, 59: -16, 60: -21, 62: -15, 65: 24, 68: -15, 71: -13, 88: 13, 98: 12,
    120: 14, 135: -8, 148: 9, 179: 17, 180: -11, 181: 9, 200: 11, 206: 22, 209: 13, 213: 19, 214: 17, 216: -11,
    226: -14, 227: 24, 228: -16, 229: -13, 230: 15, 231: -15, 232: -15, 233: -14, 234: 40, 235: 0, 236: 0, 237: 42
};
const volume = document.getElementById('volume-bars');
for (let i = 0; i < 238; i++) {
    const x = 2 + i * 2.27;
    const noise = (i * 73 + (i * i * 31) % 97) % 100;
    let v = valueAt(quiet, x) * (0.3 + noise / 110);
    if (noise % 3 === 0) {
        v = -v;
    }
    if (i in spikes) {
        v = spikes[i];
    }
    bar(volume, x, 225 - Math.abs(v), 1.3, Math.abs(v), v < 0 ? RED : GREEN);
}

// MACD histogram around the zero line
const macdPoints = [
    [0, 0], [5, -75], [12, -138], [17, -125], [22, -85], [30, -45], [36, -3], [38, 2], [45, 25], [52, 38], [60, 45],
    [67, 60], [75, 55], [82, 40], [92, 30], [100, 22], [106, 2], [112, 10], [118, 42], [124, 55], [131, 55], [137, 35],
    [143, 2], [145, -3], [154, -22], [168, -10], [180, -22], [190, -28], [203, -32], [212, -16], [218, -2], [222, 8],
    [230, 19], [240, 3], [243, -2], [260, -16], [277, -28], [285, -18], [290, -1], [296, 5], [303, 8], [312, 3],
    [325, 14], [331, 16], [336, 36], [343, 22], [350, 4], [358, 6], [370, 3], [380, 1], [384, -3], [398, -8],
    [411, -12], [418, -4], [424, 0], [428, 6], [441, 11], [451, 1], [455, -3], [466, -9], [485, -12], [491, 0],
    [495, 5], [512, 4], [514, 1], [517, -5], [524, -4], [528, 0], [530, 2], [538, 2]
];
const macd = document.getElementById('macd-bars');
for (let x = 2; x < 539; x += 2.27) {
    const v = valueAt(macdPoints, x);
    bar(macd, x, v > 0 ? 308 - v : 308, 1.4, Math.abs(v), v > 0 ? '#e03a30' : '#2c962c');
}

// Closing auction, negative values are green
const afterTop = [1, 28, 9, 6, 2, -3, 9, 9, 8, 2, 12, 16, 34, 19, 34, 35, 66, -2, 6, 17, 2];
const afterBottom = [3, 46, 92, 123, 159, -193, 209, 219, 230, 246, 257, 271, 277, 306, 308, 323, 325, -334, 351, 352, 378];
const after = document.getElementById('after-bars');
afterTop.forEach((v, i) => bar(after, i * 2.8 - 1, 0, 2.7, Math.abs(v), v < 0 ? GREEN : RED));
afterBottom.forEach((v, i) => bar(after, i * 2.8 - 1, 470 - Math.abs(v), 2.7, Math.abs(v), v < 0 ? GREEN : RED));
```
